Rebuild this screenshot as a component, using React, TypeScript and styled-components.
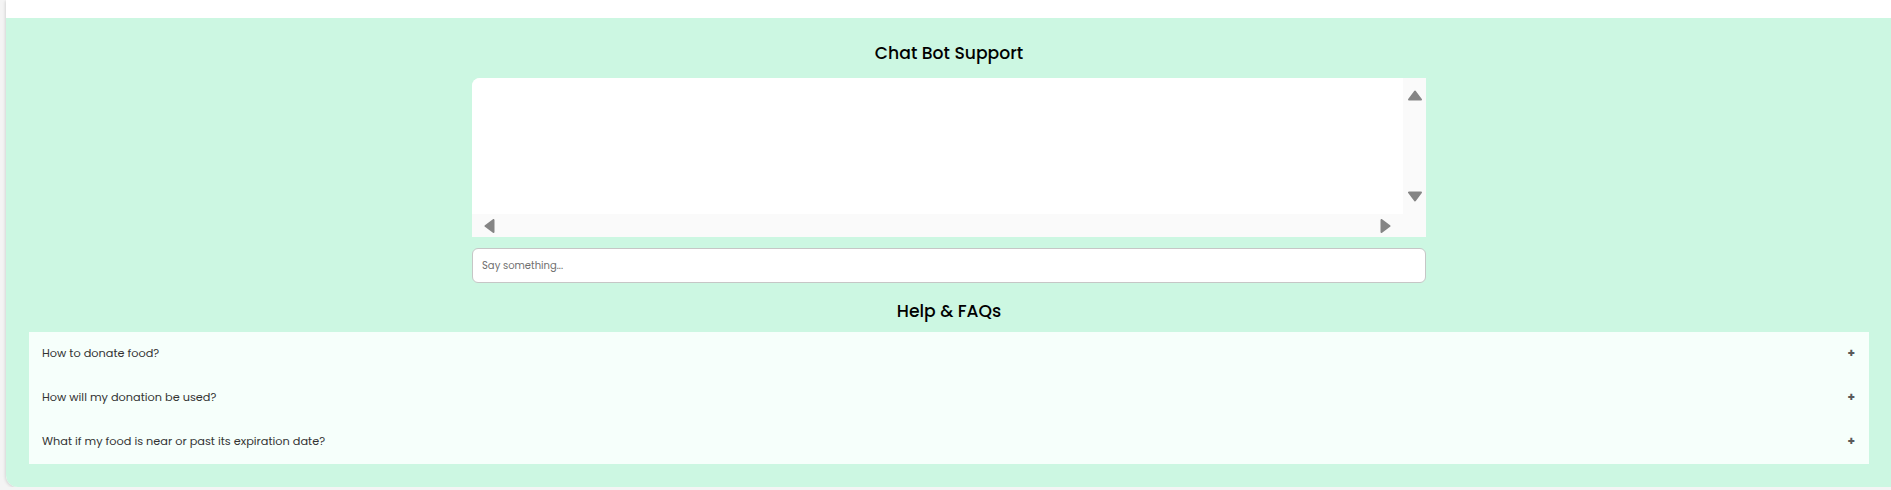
import React from "react";
import styled, { createGlobalStyle } from "styled-components";

const GlobalStyle = createGlobalStyle`
  html, body {
    margin: 0;
    padding: 0;
    background: #f4f4f4;
    overflow: hidden;
    font-family: "Poppins", "Open Sans", sans-serif;
  }
  * { box-sizing: border-box; }
`;

const Card = styled.div`
  margin: 0 -14px 0 6px;
  background: #ffffff;
  border-radius: 0 0 12px 12px;
  box-shadow: -1px 1px 3px rgba(0, 0, 0, 0.12);
  overflow: hidden;
`;

const TopStrip = styled.div`
  height: 18px;
  background: #ffffff;
`;

const SupportSection = styled.section`
  background: #ccf7e2;
  padding: 23px 36px 23px 23px;
  display: flex;
  flex-direction: column;
  align-items: center;
`;

const SectionTitle = styled.h2<{ $top?: number; $bottom: number }>`
  margin: ${(p) => p.$top ?? 0}px 0 ${(p) => p.$bottom}px;
  font-size: 17.2px;
  line-height: 24px;
  font-weight: 500;
  color: #000;
`;

const ChatBox = styled.div`
  width: 954px;
  height: 159px;
  display: grid;
  grid-template-columns: 1fr 23px;
  grid-template-rows: 1fr 23px;
  border-radius: 8px 0 0 0;
  overflow: hidden;
  background: #fafafa;
`;

const Messages = styled.div`
  background: #ffffff;
`;

const VTrack = styled.div`
  background: #fafafa;
  display: flex;
  flex-direction: column;
  align-items: center;
  justify-content: space-between;
  padding: 12px 0 12px;
`;

const HTrack = styled.div`
  background: #fafafa;
  display: flex;
  align-items: center;
  justify-content: space-between;
  padding: 0 12px;
`;

const Corner = styled.div`
  background: #fafafa;
`;

const ArrowSvg = styled.svg`
  display: block;
  fill: #858585;
  stroke: #858585;
  stroke-width: 2;
  stroke-linejoin: round;
`;

type Dir = "up" | "down" | "left" | "right";

const Arrow: React.FC<{ dir: Dir }> = ({ dir }) => {
  const vertical = dir === "up" || dir === "down";
  const w = vertical ? 14 : 11;
  const h = vertical ? 11 : 14;
  let pts = "";
  if (dir === "up") pts = "7,1.5 13,9.5 1,9.5";
  if (dir === "down") pts = "1,1.5 13,1.5 7,9.5";
  if (dir === "left") pts = "9.5,1 9.5,13 1.5,7";
  if (dir === "right") pts = "1.5,1 1.5,13 9.5,7";
  return (
    <ArrowSvg width={w} height={h} viewBox={`0 0 ${w} ${h}`}>
      <polygon points={pts} />
    </ArrowSvg>
  );
};

const MessageInput = styled.input`
  width: 954px;
  height: 35px;
  margin-top: 11px;
  border: 1px solid #c6c6c6;
  border-radius: 6px;
  background: #ffffff;
  padding: 0 9px;
  font-family: inherit;
  font-size: 10px;
  color: #333;
  outline: none;
  &::placeholder {
    color: #6f6f6f;
  }
`;

const FaqList = styled.div`
  align-self: stretch;
  background: #f6fffb;
`;

const FaqRow = styled.div`
  height: 44px;
  display: flex;
  align-items: center;
  justify-content: space-between;
  padding: 0 13px 2px;
  font-size: 11.3px;
  font-weight: 400;
  color: #333;
`;

const PlusSign = styled.span`
  font-size: 12px;
  font-weight: 700;
  color: #5a5a5a;
  line-height: 1;
  padding-right: 1px;
`;

const faqs = [
  "How to donate food?",
  "How will my donation be used?",
  "What if my food is near or past its expiration date?",
];

export default function App() {
  return (
    <>
      <GlobalStyle />
      <Card>
        <TopStrip />
        <SupportSection>
          <SectionTitle $bottom={13}>Chat Bot Support</SectionTitle>
          <ChatBox>
            <Messages />
            <VTrack>
              <Arrow dir="up" />
              <Arrow dir="down" />
            </VTrack>
            <HTrack>
              <Arrow dir="left" />
              <Arrow dir="right" />
            </HTrack>
            <Corner />
          </ChatBox>
          <MessageInput placeholder="Say something..." />
          <SectionTitle $top={16} $bottom={9}>
            Help &amp; FAQs
          </SectionTitle>
          <FaqList>
            {faqs.map((q) => (
              <FaqRow key={q}>
                <span>{q}</span>
                <PlusSign>+</PlusSign>
              </FaqRow>
            ))}
          </FaqList>
        </SupportSection>
      </Card>
    </>
  );
}
